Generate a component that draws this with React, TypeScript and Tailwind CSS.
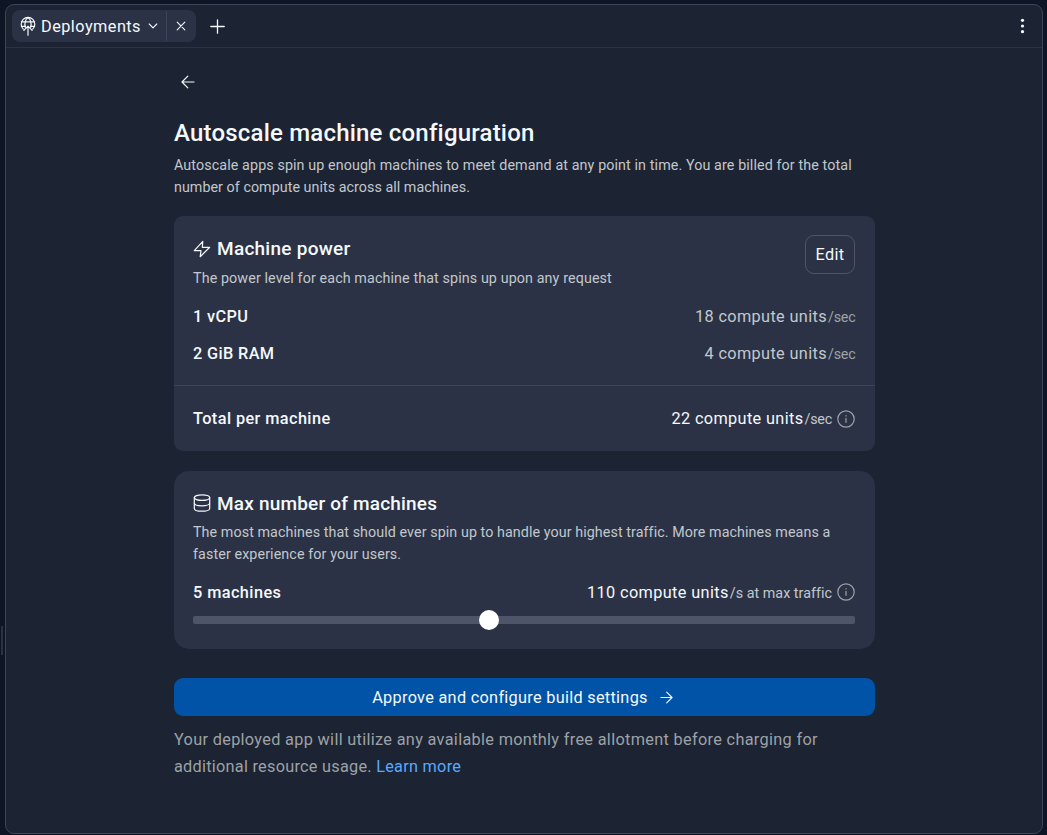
import type { ReactNode } from 'react';

type IconProps = { className?: string; children: ReactNode; viewBox?: string; width?: number };

function Icon({ className = '', children, viewBox = '0 0 18 18', width = 1.2 }: IconProps) {
  return (
    <svg className={`block shrink-0 ${className}`} viewBox={viewBox} fill="none" stroke="currentColor" strokeWidth={width} strokeLinecap="round" strokeLinejoin="round">
      {children}
    </svg>
  );
}

function InfoIcon() {
  return (
    <Icon className="ml-[5px] size-[18px] text-[#9da2a6]" width={1.2}>
      <circle cx="9" cy="9" r="8.2" />
      <path d="M9 8.3v4M9 5.6v.3" />
    </Icon>
  );
}

function Header() {
  return (
    <header className="flex h-[43px] shrink-0 items-center border-b border-[#2b3245] px-1.5">
      <div className="flex h-8 items-center rounded-lg bg-[#2b3245]">
        <div className="flex h-full w-[154px] items-center pl-2">
          <Icon className="h-5 w-4" viewBox="0 0 16 20" width={1.2}>
            <path d="M3.3 13.1A6.8 6.8 0 1 1 12.7 13.1" />
            <path d="M1.400 5.800h13.200M1.400 10.400h3.800M10.800 10.400h3.800" />
            <path d="M5.300 11.300C4.300 7.600 5.200 3 8 1.400C10.800 3 11.700 7.600 10.700 11.300" />
            <path d="M8 19.200v-9M3.900 14.300L8 10.200l4.100 4.100" />
          </Icon>
          <span className="ml-[5px] w-[101px] pt-0.5 text-[16.3px] tracking-[0.46px]">Deployments</span>
          <Icon className="ml-1.5 h-1.5 w-2.5" viewBox="0 0 10 6" width={1.1}>
            <path d="M1.200 1l3.800 3.800L8.800 1" />
          </Icon>
        </div>
        <div className="h-[30px] w-px bg-[#3c445c]" />
        <div className="flex h-full w-[29px] items-center justify-center pr-px">
          <Icon className="size-[10px]" viewBox="0 0 10 10" width={1.1}>
            <path d="M1.200 1.200l7.600 7.600M8.800 1.200L1.200 8.800" />
          </Icon>
        </div>
      </div>
      <Icon className="ml-3.5 size-[15px]" viewBox="0 0 15 15" width={1.3}>
        <path d="M7.500 .8v13.400M.8 7.500h13.400" />
      </Icon>
      <svg className="mr-[11px] ml-auto block h-[16px] w-[5px]" viewBox="0 0 5 16" fill="currentColor">
        <circle cx="2.500" cy="2.300" r="1.600" />
        <circle cx="2.500" cy="8" r="1.600" />
        <circle cx="2.500" cy="13.700" r="1.600" />
      </svg>
    </header>
  );
}

function PowerRow({ label, units }: { label: string; units: string }) {
  return (
    <div className="flex h-[37px] items-center justify-between">
      <span className="text-[16.3px] font-medium tracking-[0.36px]">{label}</span>
      <span className="flex items-baseline">
        <span className="text-[16.3px] tracking-[0.36px] text-[#c2c8cc]">{units}</span>
        <span className="ml-px text-[14.3px] tracking-[-0.2px] text-[#9da2a6]">/sec</span>
      </span>
    </div>
  );
}

function MachinePower() {
  return (
    <section className="mt-[18px] h-[235px] rounded-[9px] bg-[#2b3245]">
      <div className="flex h-[83px] justify-between pt-[19px] pr-5 pl-[19px]">
        <div>
          <h2 className="flex h-[27px] items-center text-[19px] font-medium tracking-[0.26px]">
            <Icon className="mr-1.5 size-[18px]">
              <path d="M9.800 1.300L1.300 10.700h6.700l-.8 6L16.700 7.300H9.300z" />
            </Icon>
            <span className="pt-0.5">Machine power</span>
          </h2>
          <p className="mt-[5px] text-[14.3px] leading-[22px] tracking-[0.11px] text-[#c2c8cc]">
            The power level for each machine that spins up upon any request
          </p>
        </div>
        <button className="h-[39px] w-[50px] rounded-[9px] border border-[#4e5569] pt-0.5 text-[16.3px] tracking-[0.35px]">Edit</button>
      </div>
      <div className="h-[86px] pr-[19.500px] pl-[19px]">
        <PowerRow label="1 vCPU" units="18 compute units" />
        <PowerRow label="2 GiB RAM" units="4 compute units" />
      </div>
      <div className="flex h-[66px] items-center justify-between border-t border-[#3c445c] pr-5 pl-[19px]">
        <span className="pt-0.5 text-[16.3px] font-medium tracking-[0.41px]">Total per machine</span>
        <span className="flex items-center">
          <span className="flex items-baseline pt-0.5">
            <span className="text-[16.3px] tracking-[0.36px]">22 compute units</span>
            <span className="ml-px text-[14.3px] tracking-[-0.2px] text-[#c2c8cc]">/sec</span>
          </span>
          <InfoIcon />
        </span>
      </div>
    </section>
  );
}

function MaxMachines() {
  return (
    <section className="mt-5 h-[178px] rounded-[15px] bg-[#2b3245] pt-[19px] pr-5 pl-[19px]">
      <h2 className="flex h-[27px] items-center text-[19px] font-medium tracking-[0.19px]">
        <Icon className="mr-1.5 mb-0.5 size-[18px]">
          <ellipse cx="9" cy="3.600" rx="7.700" ry="2.800" />
          <path d="M1.300 3.600v10.800c0 1.550 3.450 2.800 7.700 2.800s7.700-1.250 7.700-2.800V3.600" />
          <path d="M1.300 9c0 1.550 3.450 2.800 7.700 2.800s7.700-1.250 7.700-2.800" />
        </Icon>
        <span className="pt-0.5">Max number of machines</span>
      </h2>
      <p className="mt-1 text-[14.3px] leading-[22px] tracking-[0.075px] whitespace-nowrap text-[#c2c8cc]">
        The most machines that should ever spin up to handle your highest traffic. More machines means a
        <br />
        <span className="tracking-[0.1px]">faster experience for your users.</span>
      </p>
      <div className="mt-[15px] flex h-6 items-center justify-between">
        <span className="pt-0.5 text-[16.3px] font-medium tracking-[0.42px]">5 machines</span>
        <span className="flex items-center">
          <span className="flex items-baseline pt-0.5">
            <span className="text-[16.3px] tracking-[0.38px]">110 compute units</span>
            <span className="ml-px text-[14.3px] tracking-[0.03px] text-[#c2c8cc]">/s at max traffic</span>
          </span>
          <InfoIcon />
        </span>
      </div>
      <div className="mt-3 flex h-2 items-center rounded-[2px] bg-[#4e5569]">
        <div className="ml-[286px] size-5 shrink-0 rounded-full bg-white" />
      </div>
    </section>
  );
}

export default function App() {
  return (
    <div className="flex h-[835px] w-[1047px] items-stretch overflow-hidden bg-[#0e1525] pt-1 pr-1 pb-px font-['Roboto','Liberation_Sans',sans-serif] text-[#f5f9fc]">
      <div className="flex w-[5px] shrink-0">
        <div className="mt-[622px] ml-px h-[29px] w-[2px] bg-[#2b3245]" />
      </div>
      <main className="flex flex-1 flex-col rounded-[9px] border border-[#3c445c] bg-[#1c2333]">
        <Header />
        <div className="ml-[168px] flex w-[701px] flex-col">
          <Icon className="mt-[27px] ml-[7px] size-[14px]" viewBox="0 0 14 14" width={1.2}>
            <path d="M13 7H1M6.800 1.200L1 7l5.800 5.800" />
          </Icon>
          <h1 className="mt-7 h-8 text-[24px] leading-[33px] font-medium tracking-[0.2px]">Autoscale machine configuration</h1>
          <p className="mt-[5px] text-[14.3px] leading-[22px] tracking-[0.105px] whitespace-nowrap text-[#c2c8cc]">
            Autoscale apps spin up enough machines to meet demand at any point in time. You are billed for the total
            <br />
            <span className="tracking-[0.04px]">number of compute units across all machines.</span>
          </p>
          <MachinePower />
          <MaxMachines />
          <button className="mt-[29px] flex h-[38px] items-center justify-center rounded-[9px] bg-[#0053a6] pr-1 text-[16.3px] tracking-[0.295px]">
            <span className="pt-0.5">Approve and configure build settings</span>
            <Icon className="ml-3 size-[13px]" viewBox="0 0 14 14" width={1.2}>
              <path d="M1 7h12M7.200 1.200L13 7l-5.800 5.800" />
            </Icon>
          </button>
          <p className="mt-[10px] text-[16.3px] leading-[27px] tracking-[0.32px] whitespace-nowrap text-[#9da2a6]">
            Your deployed app will utilize any available monthly free allotment before charging for
            <br />
            <span className="tracking-[0.26px]">additional resource usage. </span>
            <a className="tracking-[0.26px] text-[#57abff]">Learn more</a>
          </p>
        </div>
      </main>
    </div>
  );
}
